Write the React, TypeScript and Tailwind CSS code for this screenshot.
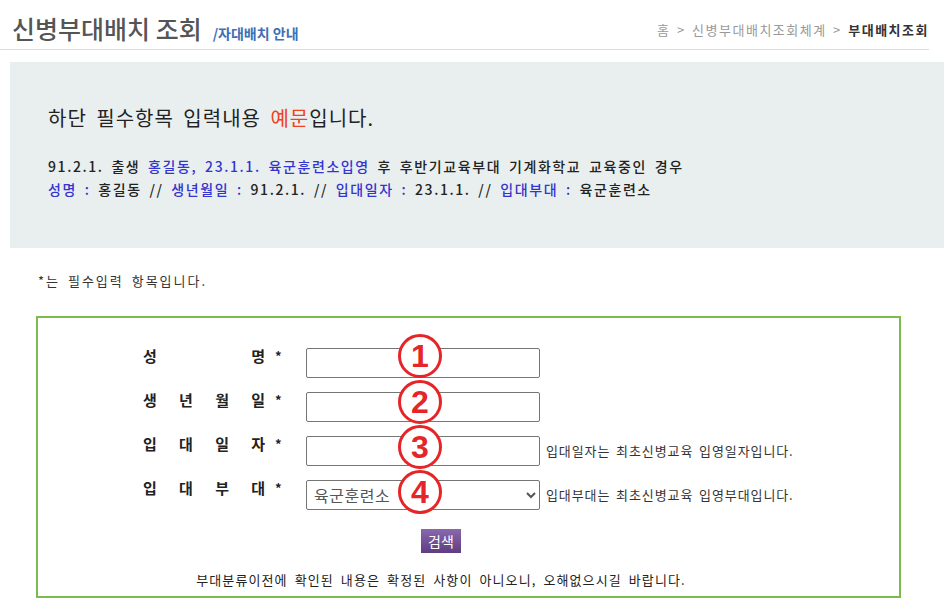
import React from "react";

const rows = [
  { chars: ["성", "명"], type: "input", help: "" },
  { chars: ["생", "년", "월", "일"], type: "input", help: "" },
  { chars: ["입", "대", "일", "자"], type: "input", help: "입대일자는 최초신병교육 입영일자입니다." },
  { chars: ["입", "대", "부", "대"], type: "select", help: "입대부대는 최초신병교육 입영부대입니다." },
];

const circles = [
  { n: "1", top: "top-[334px]" },
  { n: "2", top: "top-[380px]" },
  { n: "3", top: "top-[425px]" },
  { n: "4", top: "top-[470px]" },
];

export default function App() {
  return (
    <div className="relative w-[944px] h-[608px] overflow-hidden bg-white font-['Noto_Sans_CJK_KR',sans-serif] text-[#333]">
      {/* header */}
      <div className="w-[929px] h-[50px] border-b border-[#dcdcdc] flex items-center justify-between pl-[12px] pt-[8px]">
        <div className="flex items-baseline">
          <h1 className="text-[25px] leading-[30px] text-[#555] font-medium">신병부대배치 조회</h1>
          <span className="ml-[11px] text-[14px] font-bold text-[#3d70b8]">/자대배치 안내</span>
        </div>
        <div className="text-[13px] leading-[20px] text-[#999] pt-[2px] tracking-[1.5px] [word-spacing:2px]">
          홈 &gt; 신병부대배치조회체계 &gt; <b className="text-[#333] font-bold">부대배치조회</b>
        </div>
      </div>

      {/* example box */}
      <div className="mt-[12px] ml-[10px] w-[934px] h-[186px] bg-[#e9efef] pl-[38px] pt-[42px]">
        <p className="text-[20px] leading-[28px] text-[#222] tracking-[1px] [word-spacing:4px]">
          하단 필수항목 입력내용 <span className="text-[#ef4123]">예문</span>입니다.
        </p>
        <div className="mt-[23px] text-[14px] leading-[23px] font-medium tracking-[1.6px] [word-spacing:3px] text-[#222]">
          <p>
            91.2.1. 출생 <span className="text-[#3434d0]">홍길동, 23.1.1. 육군훈련소입영</span> 후 후반기교육부대 기계화학교 교육중인 경우
          </p>
          <p>
            <span className="text-[#3434d0]">성명 :</span> 홍길동 // <span className="text-[#3434d0]">생년월일 :</span> 91.2.1. // <span className="text-[#3434d0]">입대일자 :</span> 23.1.1. // <span className="text-[#3434d0]">입대부대 :</span> 육군훈련소
          </p>
        </div>
      </div>

      <p className="mt-[23px] ml-[38px] text-[13px] leading-[20px] text-[#333] tracking-[2px] [word-spacing:3px]">*는 필수입력 항목입니다.</p>

      {/* form box */}
      <div className="mt-[25px] ml-[36px] w-[865px] h-[282px] border-2 border-[#7cbb4e] pt-[30px]">
        <div className="flex flex-col gap-[14px] pl-[105px]">
          {rows.map((r, i) => (
            <div key={i} className="flex h-[30px]">
              <div className="w-[163px] flex items-start">
                <div className="w-[122px] flex justify-between text-[15px] leading-[16px] font-bold text-[#222]">
                  {r.chars.map((c, j) => (
                    <span key={j}>{c}</span>
                  ))}
                </div>
                <span className="ml-[10px] text-[13px] leading-[16px] font-bold text-[#222]">*</span>
              </div>
              {r.type === "input" ? (
                <input
                  type="text"
                  className="w-[234px] h-[30px] border border-[#767676] rounded-[2px] bg-white"
                />
              ) : (
                <select
                  defaultValue="육군훈련소"
                  className="w-[234px] h-[30px] border border-[#767676] rounded-[2px] bg-white text-[16px] tracking-[0.5px] text-[#555] pl-[3px]"
                >
                  <option>육군훈련소</option>
                </select>
              )}
              {r.help && (
                <span className="ml-[6px] self-center text-[13px] leading-[18px] text-[#333] tracking-[0.9px] [word-spacing:2px]">{r.help}</span>
              )}
            </div>
          ))}
        </div>
        <div className="w-[806px] flex flex-col items-center">
          <button className="mt-[19px] w-[40px] h-[24px] bg-gradient-to-b from-[#8a68ad] to-[#5e3d80] text-white text-[14px] leading-[24px]">
            검색
          </button>
          <p className="mt-[18px] text-[13px] leading-[18px] text-[#222] tracking-[1.1px] [word-spacing:3px]">
            부대분류이전에 확인된 내용은 확정된 사항이 아니오니, 오해없으시길 바랍니다.
          </p>
        </div>
      </div>

      {/* numbered annotations */}
      {circles.map((c) => (
        <div
          key={c.n}
          className={`absolute left-[398px] ${c.top} w-[44px] h-[44px] rounded-full border-[3px] border-[#e52528] bg-white flex items-center justify-center text-[#e52528] font-['Liberation_Sans',sans-serif] font-bold text-[32px] leading-none`}
        >
          {c.n}
        </div>
      ))}
    </div>
  );
}
